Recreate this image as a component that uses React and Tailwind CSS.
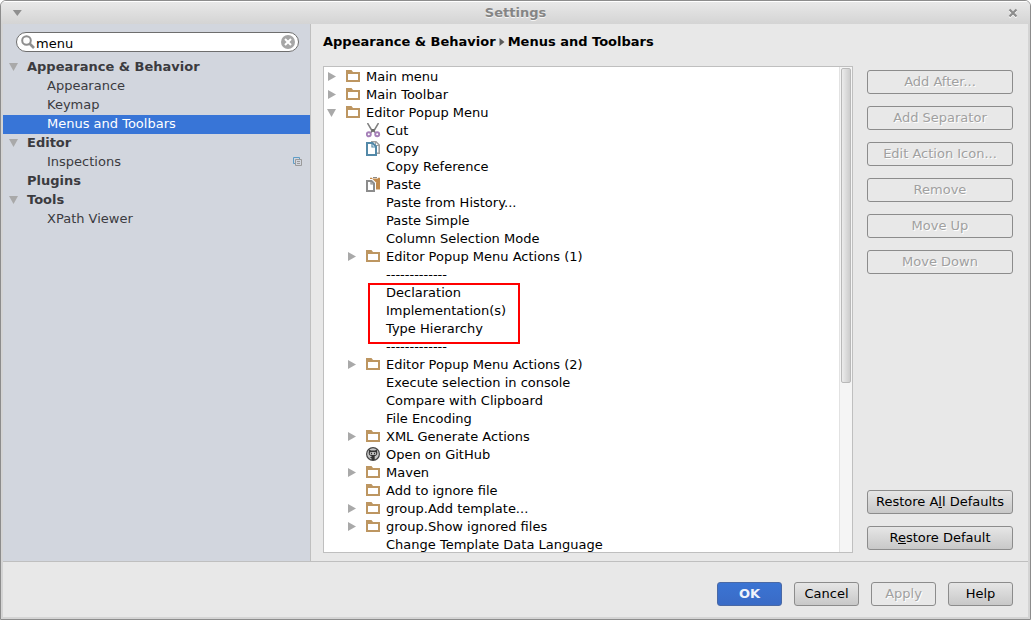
import React from "react";

const categories = [
  { label: "Appearance & Behavior", group: true, open: true },
  { label: "Appearance" },
  { label: "Keymap" },
  { label: "Menus and Toolbars", selected: true },
  { label: "Editor", group: true, open: true },
  { label: "Inspections", badge: true },
  { label: "Plugins", group: true },
  { label: "Tools", group: true, open: true },
  { label: "XPath Viewer" },
];

const rowsBefore = [
  { label: "Main menu", root: true, arrow: "right", icon: "folder" },
  { label: "Main Toolbar", root: true, arrow: "right", icon: "folder" },
  { label: "Editor Popup Menu", root: true, arrow: "down", icon: "folder" },
  { label: "Cut", icon: "cut" },
  { label: "Copy", icon: "copy" },
  { label: "Copy Reference" },
  { label: "Paste", icon: "paste" },
  { label: "Paste from History..." },
  { label: "Paste Simple" },
  { label: "Column Selection Mode" },
  { label: "Editor Popup Menu Actions (1)", arrow: "right", icon: "folder" },
  { label: "-------------" },
];

const rowsMarked = [
  { label: "Declaration" },
  { label: "Implementation(s)" },
  { label: "Type Hierarchy" },
];

const rowsAfter = [
  { label: "-------------" },
  { label: "Editor Popup Menu Actions (2)", arrow: "right", icon: "folder" },
  { label: "Execute selection in console" },
  { label: "Compare with Clipboard" },
  { label: "File Encoding" },
  { label: "XML Generate Actions", arrow: "right", icon: "folder" },
  { label: "Open on GitHub", icon: "github" },
  { label: "Maven", arrow: "right", icon: "folder" },
  { label: "Add to ignore file", icon: "folder" },
  { label: "group.Add template...", arrow: "right", icon: "folder" },
  { label: "group.Show ignored files", arrow: "right", icon: "folder" },
  { label: "Change Template Data Language" },
];

function Arrow({ dir }) {
  return (
    <svg width="12" height="12" viewBox="0 0 12 12" fill="#a9a9a9" aria-hidden="true">
      {dir === "down" ? <path d="M1 2h9L5.5 10z" /> : <path d="M2 1v9L10 5.500z" />}
    </svg>
  );
}

function FolderIcon() {
  return (
    <svg width="16" height="16" viewBox="0 0 16 16" aria-hidden="true">
      <path
        d="M0 1h5.500L7 3h7v10H0zM2 5v6h10V5z"
        fill="#bd9661"
        fillRule="evenodd"
      />
    </svg>
  );
}

function CutIcon() {
  return (
    <svg width="16" height="16" viewBox="0 0 16 16" fill="none" aria-hidden="true">
      <path d="M1.500 0l5 8.500M12.500 0l-5 8.500" stroke="#808080" strokeWidth="1.500" />
      <path d="M5.500 6h3v2l2 1.500-1 1L7 8.500l-2.500 2-1-1 2-1.500z" fill="#6b6b6b" />
      <circle cx="2.800" cy="11.300" r="2" stroke="#a57fb8" strokeWidth="1.900" />
      <circle cx="11.200" cy="11.300" r="2" stroke="#a57fb8" strokeWidth="1.900" />
    </svg>
  );
}

function CopyIcon() {
  return (
    <svg width="16" height="16" viewBox="0 0 16 16" fill="none" aria-hidden="true">
      <path d="M5 .8h5L13.200 4v8.200H11" stroke="#a0a0a0" strokeWidth="1.600" />
      <path d="M9.500 1v3.500H13" stroke="#a0a0a0" />
      <path d="M1 2h5.500L10 5.500V14H1z" fill="#fff" stroke="#5389a8" strokeWidth="2" />
      <path d="M6 2v4h4" stroke="#5389a8" strokeWidth="1.200" />
    </svg>
  );
}

function PasteIcon() {
  return (
    <svg width="16" height="16" viewBox="0 0 16 16" fill="none" aria-hidden="true">
      <path d="M4 .8h10v11.700H4z" fill="#c1894a" />
      <path d="M6 0h6v1.500H6z" fill="#fff" />
      <path d="M7 .500h4" stroke="#8a8a8a" />
      <path d="M0 2h6.500L10 5.500V16H0z" fill="#fff" />
      <path d="M1 4h4.500L8 6.500V14H1z" fill="#fff" stroke="#8c8c8c" strokeWidth="2" />
      <path d="M5 4v3h3" stroke="#8c8c8c" strokeWidth="1.200" />
    </svg>
  );
}

function GithubIcon() {
  return (
    <svg width="16" height="16" viewBox="0 0 16 16" aria-hidden="true">
      <circle cx="7" cy="7" r="7" fill="#444" />
      <circle cx="7" cy="7" r="5.800" fill="#c6c6c6" />
      <path
        d="M3.200 2.500L5 3.600h4l1.800-1.100.5 3.500c0 1.800-1.100 2.800-2.600 3V13H5.500v-1.800L3.500 10.200l2-.2V9C3.800 8.800 2.700 7.800 2.700 6z"
        fill="#333"
      />
      <rect x="3.800" y="5" width="6.400" height="3" rx="1.300" fill="#bdbdbd" />
      <path d="M5 5.700h1v1.500H5zM8 5.700h1v1.500H8z" fill="#333" />
    </svg>
  );
}

const icons = {
  folder: FolderIcon,
  cut: CutIcon,
  copy: CopyIcon,
  paste: PasteIcon,
  github: GithubIcon,
};

function TreeRow({ row }) {
  const Icon = row.icon ? icons[row.icon] : null;
  return (
    <li
      role="treeitem"
      className={`flex h-[18px] items-center whitespace-nowrap ${row.root ? "pl-0.5" : "pl-[22px]"}`}
    >
      <span className="flex w-5 shrink-0">
        {row.arrow && (
          <button type="button" aria-label={`Toggle ${row.label}`}>
            <Arrow dir={row.arrow} />
          </button>
        )}
      </span>
      <span className="w-5 shrink-0">{Icon && <Icon />}</span>
      <span>{row.label}</span>
    </li>
  );
}

function Button({ children, disabled, primary, className = "" }) {
  const look = primary
    ? "border-[#4a69a5] bg-linear-to-b from-[#3b74d3] to-[#3a6bc6] font-bold text-[#eef3fb]"
    : disabled
      ? "border-[#8c8c8c] text-[#a0a0a0] [text-shadow:1px_1px_0_#fff]"
      : "border-[#8c8c8c] bg-linear-to-b from-[#e6e6e6] to-[#c8c8c8] text-black";
  return (
    <button
      type="button"
      disabled={disabled}
      className={`h-6 rounded-[3px] border text-center leading-4 whitespace-nowrap ${look} ${className}`}
    >
      {children}
    </button>
  );
}

function Sidebar() {
  return (
    <aside className="w-[308px] shrink-0 border-r border-[#bfbfbf] bg-[#d2d6de] pt-2 text-[#3b3b3f]">
      <div className="mr-[11px] mb-1.5 ml-[13px] flex h-5 items-center rounded-full border border-[#6e6e6e] bg-white pr-[3px] pl-1 text-black">
        <label htmlFor="settings-search" aria-label="Search settings">
          <svg width="14" height="14" viewBox="0 0 14 14" fill="none" stroke="#8f8f8f" aria-hidden="true">
            <circle cx="5.500" cy="5.500" r="4.300" strokeWidth="2" />
            <path d="M8.500 8.500l4.500 4.500" strokeWidth="2.600" />
          </svg>
        </label>
        <input
          id="settings-search"
          type="text"
          aria-label="Search settings"
          defaultValue="menu"
          className="ml-px h-[18px] min-w-0 flex-1 bg-transparent pt-0.5 leading-4 outline-none"
        />
        <button type="button" aria-label="Clear search">
          <svg width="14" height="14" viewBox="0 0 14 14" aria-hidden="true">
            <circle cx="7" cy="7" r="7" fill="#a6a6a6" />
            <path d="M4 4l6 6M10 4l-6 6" stroke="#fff" strokeWidth="2" />
          </svg>
        </button>
      </div>
      <ul role="tree" aria-label="Categories">
        {categories.map((item) => (
          <li
            key={item.label}
            role="treeitem"
            aria-selected={!!item.selected}
            className={`flex h-[19px] items-center pr-[7px] pb-px ${item.group ? "pl-1" : "pl-6"} ${
              item.selected ? "bg-[#3875d7] text-white" : ""
            } ${item.group ? "font-bold" : ""}`}
          >
            <span className="flex w-5 shrink-0 pl-px">
              {item.open && (
                <button type="button" aria-label={`Toggle ${item.label}`}>
                  <Arrow dir="down" />
                </button>
              )}
            </span>
            <span className="flex-1">{item.label}</span>
            {item.badge && (
              <svg width="10" height="10" viewBox="0 0 10 10" fill="none" aria-hidden="true">
                <path d="M2 6.500H.5v-6h6V2" stroke="#5f9dc6" />
                <path d="M2.500 2.500h6v6h-6z" stroke="#9a9a9a" />
                <path d="M4 4.500h3M4 6.500h3" stroke="#9a9a9a" />
              </svg>
            )}
          </li>
        ))}
      </ul>
    </aside>
  );
}

function ActionTree() {
  return (
    <div className="flex min-w-0 flex-1 overflow-hidden border border-[#bfbfbf] bg-white">
      <ul role="tree" aria-label="Menus and toolbars" className="min-w-0 flex-1 overflow-hidden pt-px">
        {rowsBefore.map((row) => (
          <TreeRow key={row.label} row={row} />
        ))}
        <li role="none" className="relative">
          <ul role="group">
            {rowsMarked.map((row) => (
              <TreeRow key={row.label} row={row} />
            ))}
          </ul>
          <div className="pointer-events-none absolute -top-px -bottom-1.5 left-11 w-[152px] border-2 border-[#f00]" />
        </li>
        {rowsAfter.map((row) => (
          <TreeRow key={row.label} row={row} />
        ))}
      </ul>
      <div className="w-[13px] shrink-0 border-l border-[#e2e2e2] bg-[#f5f5f5] px-px pt-px">
        <div className="h-[65%] rounded-[2px] border border-[#b9b9b9] bg-linear-to-r from-[#ececec] to-[#cccccc]" />
      </div>
    </div>
  );
}

export default function App() {
  return (
    <div className="flex h-screen flex-col overflow-hidden rounded-t-md border border-[#8c8c8c] bg-[#e8e8e8] font-['DejaVu_Sans',sans-serif] text-[13px] leading-4 text-black">
      <header className="flex h-[23px] shrink-0 items-center justify-between border-t border-white bg-linear-to-b from-[#e8e8e8] to-[#d4d4d4] px-[11px] text-[#858585]">
        <button type="button" aria-label="Window menu">
          <svg width="12" height="8" viewBox="0 0 12 8" aria-hidden="true">
            <path d="M.8 1h9L5.300 7z" fill="#8f8f8f" />
          </svg>
        </button>
        <h1 className="font-bold [text-shadow:0_1px_0_#f5f5f5]">Settings</h1>
        <button type="button" aria-label="Close">
          <svg width="12" height="12" viewBox="0 0 12 12" aria-hidden="true">
            <path d="M2.500 3.500l7 7M9.500 3.500l-7 7" stroke="#fff" strokeWidth="2" />
            <path d="M2.500 2.500l7 7M9.500 2.500l-7 7" stroke="#8c8c8c" strokeWidth="2.200" />
          </svg>
        </button>
      </header>
      <div className="flex min-h-0 flex-1 flex-col border-x-2 border-b-2 border-[#d4d4d4]">
        <div className="flex min-h-0 flex-1">
          <Sidebar />
          <main className="flex min-w-0 flex-1 flex-col pr-[15px] pb-2 pl-3">
            <h2 className="mb-1.5 flex h-9 shrink-0 items-center font-bold">
              <span>Appearance &amp; Behavior</span>
              <svg width="12" height="10" viewBox="0 0 12 10" aria-hidden="true">
                <path d="M3.500 1v8l5-4z" fill="#5a5a5a" />
              </svg>
              <span>Menus and Toolbars</span>
            </h2>
            <div className="flex min-h-0 flex-1 gap-3.5">
              <ActionTree />
              <div className="flex w-[146px] shrink-0 flex-col gap-3 pt-1 pb-[3px]">
                <Button disabled>Add After...</Button>
                <Button disabled>Add Separator</Button>
                <Button disabled>Edit Action Icon...</Button>
                <Button disabled>Remove</Button>
                <Button disabled>Move Up</Button>
                <Button disabled>Move Down</Button>
                <Button className="mt-auto">
                  Restore A<u>l</u>l Defaults
                </Button>
                <Button>
                  R<u>e</u>store Default
                </Button>
              </div>
            </div>
          </main>
        </div>
        <footer className="flex shrink-0 justify-end gap-3 border-t border-[#bfbfbf] pt-5 pr-[15px] pb-[11px]">
          <Button primary className="w-[65px]">OK</Button>
          <Button className="w-[65px]">Cancel</Button>
          <Button disabled className="w-[65px]">Apply</Button>
          <Button className="w-[65px]">Help</Button>
        </footer>
      </div>
    </div>
  );
}
